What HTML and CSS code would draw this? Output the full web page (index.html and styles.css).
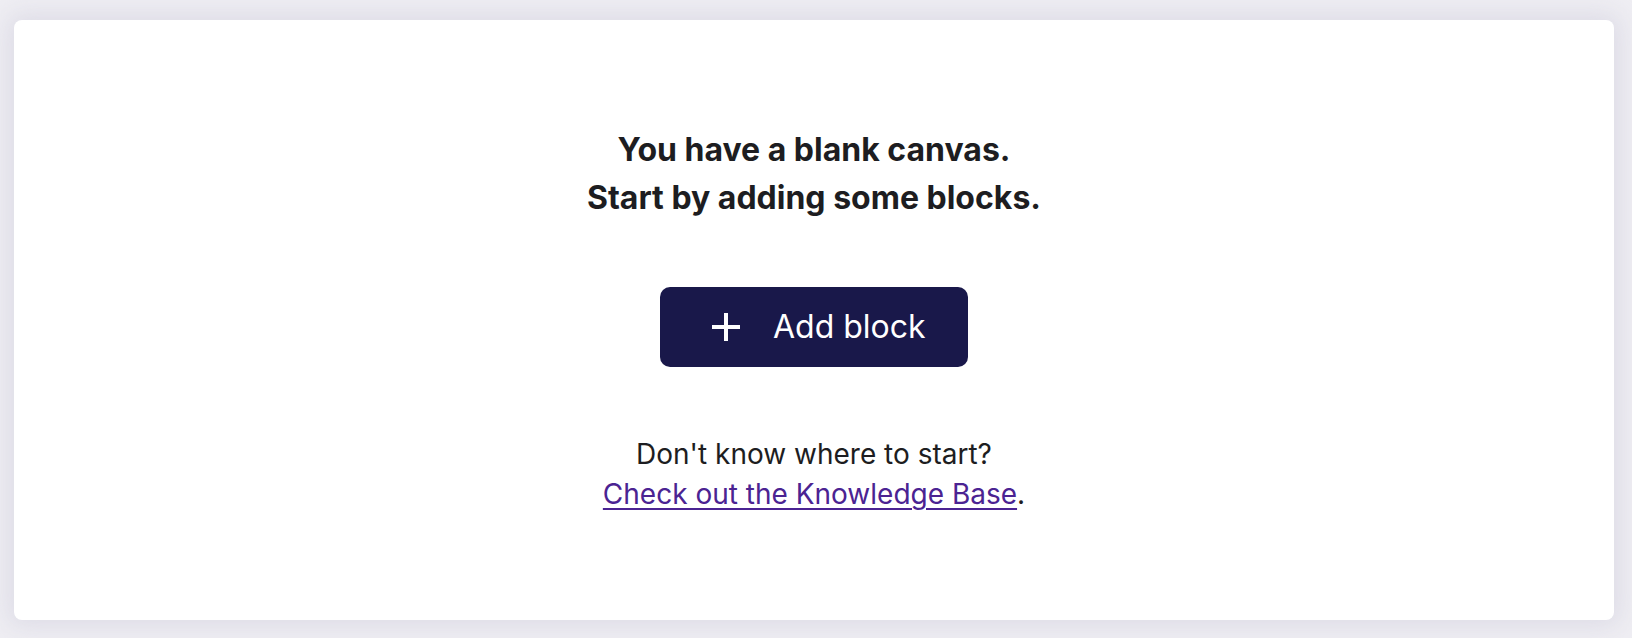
FILE: index.html
```html
<!DOCTYPE html>
<html lang="en">
<head>
<meta charset="utf-8">
<title>Blank canvas</title>
<link rel="stylesheet" href="styles.css">
</head>
<body>
<div class="page">
  <main class="card">
    <div class="empty">
      <h1 class="empty-title">You have a blank canvas.<br>Start by adding some blocks.</h1>
      <button class="add-btn" type="button">
        <svg class="add-icon" width="28" height="28" viewBox="0 0 28 28" aria-hidden="true">
          <path d="M14 0V28M0 14H28" stroke="#ffffff" stroke-width="4" fill="none"/>
        </svg>
        <span class="add-label">Add block</span>
      </button>
      <p class="help">Don't know where to start?<br><a class="help-link" href="#">Check out the Knowledge Base</a>.</p>
    </div>
  </main>
</div>
</body>
</html>
```

FILE: styles.css
```css
html, body {
  margin: 0;
  padding: 0;
}

body {
  background: #efeef3;
  font-family: Inter, "Noto Sans", "Liberation Sans", sans-serif;
  color: #1d1d21;
}

.page {
  padding: 20px 18px 18px 14px;
  height: 638px;
  box-sizing: border-box;
}

.card {
  background: #ffffff;
  border-radius: 8px;
  height: 600px;
  box-shadow: 0 0 24px 6px rgba(200, 198, 215, 0.45);
  display: flex;
  align-items: center;
  justify-content: center;
}

.empty {
  display: flex;
  flex-direction: column;
  align-items: center;
  text-align: center;
}

.empty-title {
  margin: 0;
  font-size: 32px;
  line-height: 48px;
  font-weight: 700;
  color: #1d1d21;
}

.add-btn {
  margin-top: 65px;
  width: 308px;
  height: 80px;
  border: none;
  border-radius: 10px;
  background: #19184a;
  color: #ffffff;
  display: flex;
  align-items: center;
  padding: 0 0 0 52px;
  gap: 33px;
  font-family: inherit;
  font-size: 32px;
  font-weight: 400;
  cursor: pointer;
}

.add-icon {
  flex: none;
  display: block;
}

.add-label {
  line-height: 1;
}

.help {
  margin: 67px 0 0;
  font-size: 28px;
  line-height: 40px;
  color: #1d1d21;
}

.help-link {
  color: #4b2392;
  text-decoration: underline;
  text-underline-offset: 4px;
  text-decoration-thickness: 2px;
}
```
